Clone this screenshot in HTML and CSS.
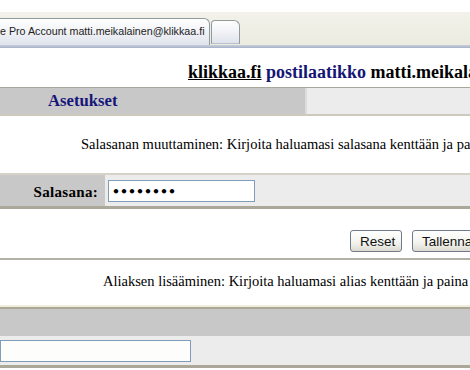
FILE: index.html
```html
<!DOCTYPE html>
<html>
    <head>
        <title>Asetukset</title>
        <link rel="stylesheet" href="styles.css">
    </head>
    <body>
        <!--Browser tab strip-->
        <div class="TAB_BAR">
            <div class="TAB TAB_ACTIVE">e Pro Account matti.meikalainen@klikkaa.fi</div>
            <div class="TAB TAB_NEW"></div>
        </div>
        <div class="TAB_LINE"></div>

        <div class="PAGE">
            <!--Site title-->
            <div class="TITLE">
                <span class="TITLE_SITE">klikkaa.fi</span>
                <span class="TITLE_BOX">postilaatikko</span>
                <span>matti.meikalainen@klikkaa.fi</span>
            </div>

            <!--Menu row-->
            <div class="MENU_ROW">
                <div class="MENU_LEFT">Asetukset</div>
                <div class="MENU_RIGHT"></div>
            </div>

            <!--Password change-->
            <div class="INFO INFO_PASSWORD">
                Salasanan muuttaminen: Kirjoita haluamasi salasana kenttään ja paina tallenna.
            </div>
            <div class="FIELD_ROW">
                <div class="FIELD_LABEL">Salasana:</div>
                <div class="FIELD_VALUE">
                    <input type="password" class="FIELD_INPUT" value="salasana">
                </div>
            </div>
            <div class="BUTTON_ROW">
                <input type="reset" class="BUTTON BUTTON_RESET" value="Reset">
                <input type="submit" class="BUTTON" value="Tallenna">
            </div>

            <!--Alias adding-->
            <div class="INFO INFO_ALIAS">
                Aliaksen lisääminen: Kirjoita haluamasi alias kenttään ja paina lisää.
            </div>
            <div class="ALIAS_BAR"></div>
            <div class="ALIAS_ROW">
                <input type="text" class="ALIAS_INPUT">
            </div>
        </div>
    </body>
</html>
```

FILE: styles.css
```css
/*XP gray: #C8C8C8*/
/*Light gray: #ECECEC*/
html, body {
    overflow: hidden;
}
body {
    margin: 0;
    width: 470px;
    height: 370px;
    font-family: "Liberation Serif", serif;
    background-color: white;
}
/*Browser tabs*/
.TAB_BAR {
    display: flex;
    align-items: flex-end;
    height: 33px;
    margin-top: 12px;
    background: linear-gradient(#f3f2ea, #ecebe0);
    overflow: hidden;
}
.TAB {
    box-sizing: border-box;
    border: 1px solid #919b9c;
    border-bottom: none;
    border-radius: 0 6px 0 0;
    background: linear-gradient(#ffffff, #f4f5f8 40%, #dfe3ec);
}
.TAB_ACTIVE {
    flex: none;
    width: 212px;
    height: 27px;
    margin-left: -2px;
    padding: 6px 0 0 2px;
    font-family: "Liberation Sans", sans-serif;
    font-size: 10.7px;
    color: #222;
    white-space: nowrap;
    border-left: none;
}
.TAB_NEW {
    flex: none;
    width: 29px;
    height: 24px;
    margin-left: 1px;
    margin-bottom: 1px;
    border-radius: 4px 6px 0 0;
    border-bottom: 1px solid #b8c0cc;
}
.TAB_LINE {
    height: 3px;
    background: linear-gradient(#c9d0de, #a6b1c6);
}
/*Page content, wider than the window*/
.PAGE {
    width: 760px;
}
.TITLE {
    margin-top: 14px;
    padding-left: 188px;
    height: 25px;
    font-size: 18px;
    font-weight: bold;
    white-space: nowrap;
}
.TITLE_SITE {
    text-decoration: underline;
}
.TITLE_BOX {
    color: #151574;
}
.MENU_ROW {
    display: flex;
    height: 26px;
    border-top: 1px solid #a9a69c;
    border-bottom: 2px solid #cdcabd;
    background-color: #ececec;
}
.MENU_LEFT {
    width: 257px;
    padding-left: 48px;
    line-height: 26px;
    font-size: 16.7px;
    font-weight: bold;
    color: #15157a;
    background-color: #c8c8c8;
    border-right: 2px solid #dcdcdc;
}
.MENU_RIGHT {
    flex: 1;
}
.INFO {
    font-size: 14.5px;
    white-space: nowrap;
}
.INFO_PASSWORD {
    height: 57px;
    padding-left: 81px;
    line-height: 57px;
    border-bottom: 2px solid #d6d3c6;
}
.FIELD_ROW {
    display: flex;
    height: 31px;
    border-bottom: 3px solid #aca899;
    background-color: #ececec;
}
.FIELD_LABEL {
    width: 98px;
    padding-right: 7px;
    text-align: right;
    line-height: 34px;
    font-size: 15px;
    font-weight: bold;
    letter-spacing: 0.3px;
    background-color: #c8c8c8;
}
.FIELD_VALUE {
    padding-left: 3px;
    padding-top: 5px;
}
.FIELD_INPUT {
    box-sizing: border-box;
    width: 147px;
    height: 22px;
    margin: 0;
    padding: 0 3px;
    font-family: "DejaVu Sans", sans-serif;
    font-size: 12.5px;
    font-weight: bold;
    letter-spacing: 0px;
    border: 1px solid #7f9db9;
    background-color: white;
}
.BUTTON_ROW {
    display: flex;
    height: 51px;
    padding-left: 350px;
    padding-top: 21px;
    box-sizing: border-box;
    border-bottom: 2px solid #b3b0a6;
}
.BUTTON {
    box-sizing: border-box;
    height: 22px;
    margin: 0 10px 0 0;
    padding: 0 9px;
    font-family: "Liberation Sans", sans-serif;
    font-size: 13.5px;
    color: #111;
    border: 1px solid #6f7b8c;
    border-radius: 3px;
    background: linear-gradient(#ffffff, #f3f3ee 60%, #dcdad0);
}
.BUTTON_RESET {
    width: 52px;
}
.INFO_ALIAS {
    height: 45px;
    padding-left: 103px;
    line-height: 42px;
    border-bottom: 2px solid #f1eddd;
}
.ALIAS_BAR {
    height: 27px;
    border-top: 2px solid #aca899;
    background-color: #c8c8c8;
}
.ALIAS_ROW {
    height: 32px;
    padding-top: 4px;
    box-sizing: border-box;
    background-color: #ececec;
    border-bottom: 3px solid #aca899;
}
.ALIAS_INPUT {
    box-sizing: border-box;
    width: 191px;
    height: 22px;
    margin: 0;
    border: 1px solid #7f9db9;
    background-color: #fdfdfb;
}
```
